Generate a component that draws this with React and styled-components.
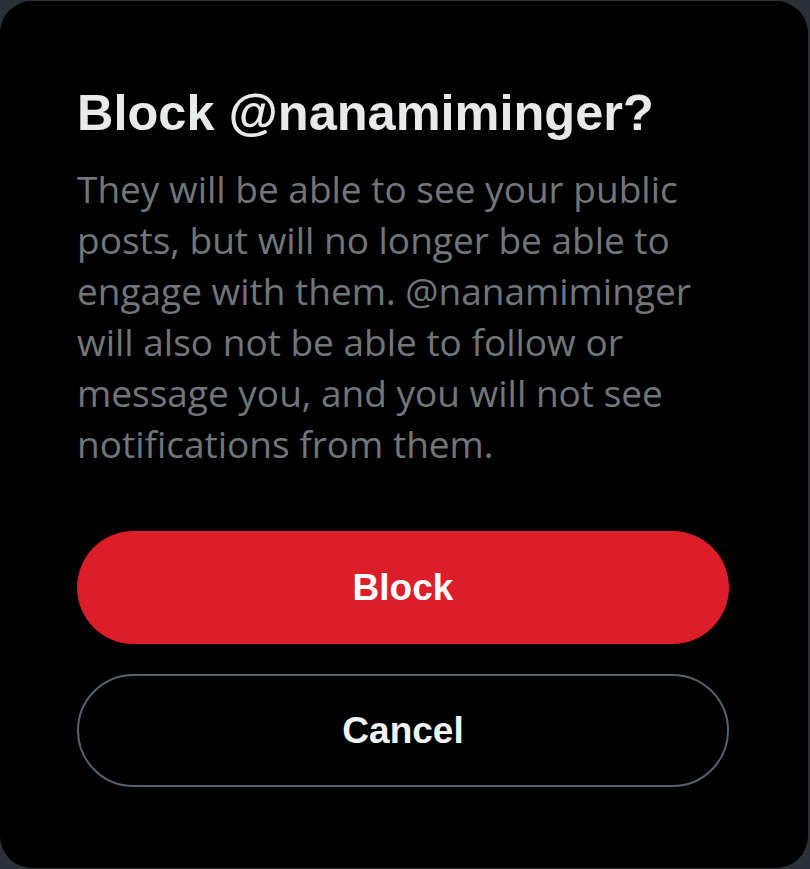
import styled, { createGlobalStyle } from "styled-components";

const GlobalStyle = createGlobalStyle`
    html, body {
        margin: 0;
        padding: 0;
        background: #2a3138;
    }
    * {
        box-sizing: border-box;
    }
`;

const handle = "nanamiminger";
const message = `They will be able to see your public posts, but will no longer be able to engage with them. @${handle} will also not be able to follow or message you, and you will not see notifications from them.`;

const App = () => {
    return (
        <>
            <GlobalStyle />
            <Dialog role="dialog">
                <Title>{`Block @${handle}?`}</Title>
                <Body>{message}</Body>
                <Actions>
                    <Button $variant="danger">Block</Button>
                    <Button>Cancel</Button>
                </Actions>
            </Dialog>
        </>
    );
};

export default App;

const Dialog = styled.div`
    width: 808px;
    height: 867px;
    margin-top: 1px;
    background: #000;
    border-radius: 32px;
    padding: 76px 79px 81px 77px;
    display: flex;
    flex-direction: column;
`;

const Title = styled.h1`
    margin: 0;
    font-family: "Liberation Sans", Arial, sans-serif;
    font-weight: 700;
    font-size: 50.5px;
    line-height: 72px;
    color: #e7e9ea;
`;

const Body = styled.p`
    margin: 14px 0 0;
    font-family: "Open Sans", "Noto Sans", sans-serif;
    font-size: 37px;
    line-height: 51px;
    color: #71767b;
`;

const Actions = styled.div`
    margin-top: auto;
    display: flex;
    flex-direction: column;
    gap: 30px;
`;

const Button = styled.button`
    height: 113px;
    width: 100%;
    border-radius: 999px;
    border: ${(p) => (p.$variant === "danger" ? "none" : "2px solid #536471")};
    background: ${(p) => (p.$variant === "danger" ? "#dc1e29" : "transparent")};
    color: ${(p) => (p.$variant === "danger" ? "#ffffff" : "#eff3f4")};
    font-family: "Liberation Sans", Arial, sans-serif;
    font-weight: 700;
    font-size: 37px;
    cursor: pointer;
`;
